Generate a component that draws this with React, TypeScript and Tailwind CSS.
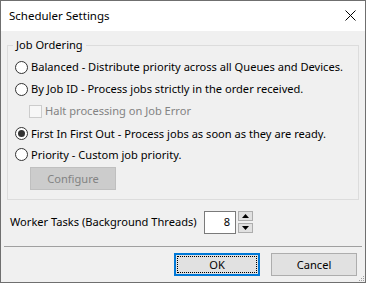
import React from 'react';

const FONT = "font-['Segoe_UI','Noto_Sans',sans-serif]";

const Radio: React.FC<{ checked?: boolean; label: string; className?: string }> = ({ checked, label, className }) => (
  <div className={`flex items-center ${className ?? 'h-[22px]'}`}>
    <span className="w-[13px] h-[13px] rounded-full border border-[#333333] bg-white flex items-center justify-center shrink-0">
      {checked && <span className="w-[7px] h-[7px] rounded-full bg-[#333333]" />}
    </span>
    <span className="ml-[3px] whitespace-nowrap text-black">{label}</span>
  </div>
);

const Triangle: React.FC<{ up?: boolean }> = ({ up }) => (
  <svg width="7" height="4" viewBox="0 0 7 4">
    {up ? <polygon points="0,4 7,4 3.5,0" fill="#000" /> : <polygon points="0,0 7,0 3.5,4" fill="#000" />}
  </svg>
);

export default function App() {
  return (
    <div className={`w-[366px] h-[283px] border border-[#6f6f6f] bg-[#f0f0f0] flex flex-col text-[11.1px] leading-[16px] ${FONT}`}>
      {/* title bar */}
      <div className="h-[30px] bg-white flex items-center justify-between pl-[8px] pr-[9px] shrink-0">
        <span className="text-black text-[11.5px]">Scheduler Settings</span>
        <svg width="11" height="11" viewBox="0 0 11 11" className="mb-[1px]">
          <path d="M0.5 0.5 L10.5 10.5 M10.5 0.5 L0.5 10.5" stroke="#000" strokeWidth="1" />
        </svg>
      </div>

      {/* group box */}
      <fieldset className="mx-[6px] mt-[6px] border border-[#dcdcdc] pl-[7px] pb-[9px] pt-[3px]">
        <legend className="-ml-[2px] px-[3px] text-black">Job Ordering</legend>
        <Radio label="Balanced - Distribute priority across all Queues and Devices." />
        <Radio label="By Job ID - Process jobs strictly in the order received." />
        <div className="flex items-center h-[22px] pl-[14px]">
          <span className="w-[13px] h-[13px] border border-[#cccccc] bg-[#f7f7f7] shrink-0" />
          <span className="ml-[3px] text-[#838383] whitespace-nowrap">Halt processing on Job Error</span>
        </div>
        <Radio checked label="First In First Out - Process jobs as soon as they are ready." className="h-[23px]" />
        <Radio label="Priority - Custom job priority." className="h-[19px]" />
        <div className="mt-[3px] ml-[15px] w-[86px] h-[23px] bg-[#cccccc] border border-[#bfbfbf] flex items-center justify-center text-[#838383]">
          Configure
        </div>
      </fieldset>

      {/* worker tasks */}
      <div className="flex items-center h-[24px] mt-[10px] pl-[9px]">
        <span className="text-black whitespace-nowrap w-[194px]">Worker Tasks (Background Threads)</span>
        <div className="w-[32px] h-[23px] bg-white border border-[#7a7a7a] flex items-center justify-end pr-[5px] text-black">8</div>
        <div className="ml-[2px] flex flex-col gap-[2px]">
          <div className="w-[15px] h-[10px] bg-[#e1e1e1] border border-[#adadad] flex items-center justify-center"><Triangle up /></div>
          <div className="w-[15px] h-[10px] bg-[#e1e1e1] border border-[#adadad] flex items-center justify-center"><Triangle /></div>
        </div>
      </div>

      {/* separator */}
      <div className="mt-[12px] mx-[3px] h-[1px] bg-[#a0a0a0]" />

      {/* buttons */}
      <div className="flex justify-end gap-[11px] pr-[8px] mt-[6px] relative flex-1">
        <div className="w-[86px] h-[23px] border-2 border-[#0078d7] bg-[#e1e1e1] p-[1px]">
          <div className="w-full h-full border border-dotted border-black flex items-center justify-center text-black">OK</div>
        </div>
        <div className="w-[86px] h-[23px] border border-[#adadad] bg-[#e1e1e1] flex items-center justify-center text-black">Cancel</div>
        <svg width="7" height="7" viewBox="0 0 7 7" className="absolute right-0 bottom-0">
          <rect x="5" y="1" width="1" height="1" fill="#a0a0a0" />
          <rect x="3" y="3" width="1" height="1" fill="#a0a0a0" />
          <rect x="5" y="3" width="1" height="1" fill="#a0a0a0" />
          <rect x="1" y="5" width="1" height="1" fill="#a0a0a0" />
          <rect x="3" y="5" width="1" height="1" fill="#a0a0a0" />
          <rect x="5" y="5" width="1" height="1" fill="#a0a0a0" />
        </svg>
      </div>
    </div>
  );
}
